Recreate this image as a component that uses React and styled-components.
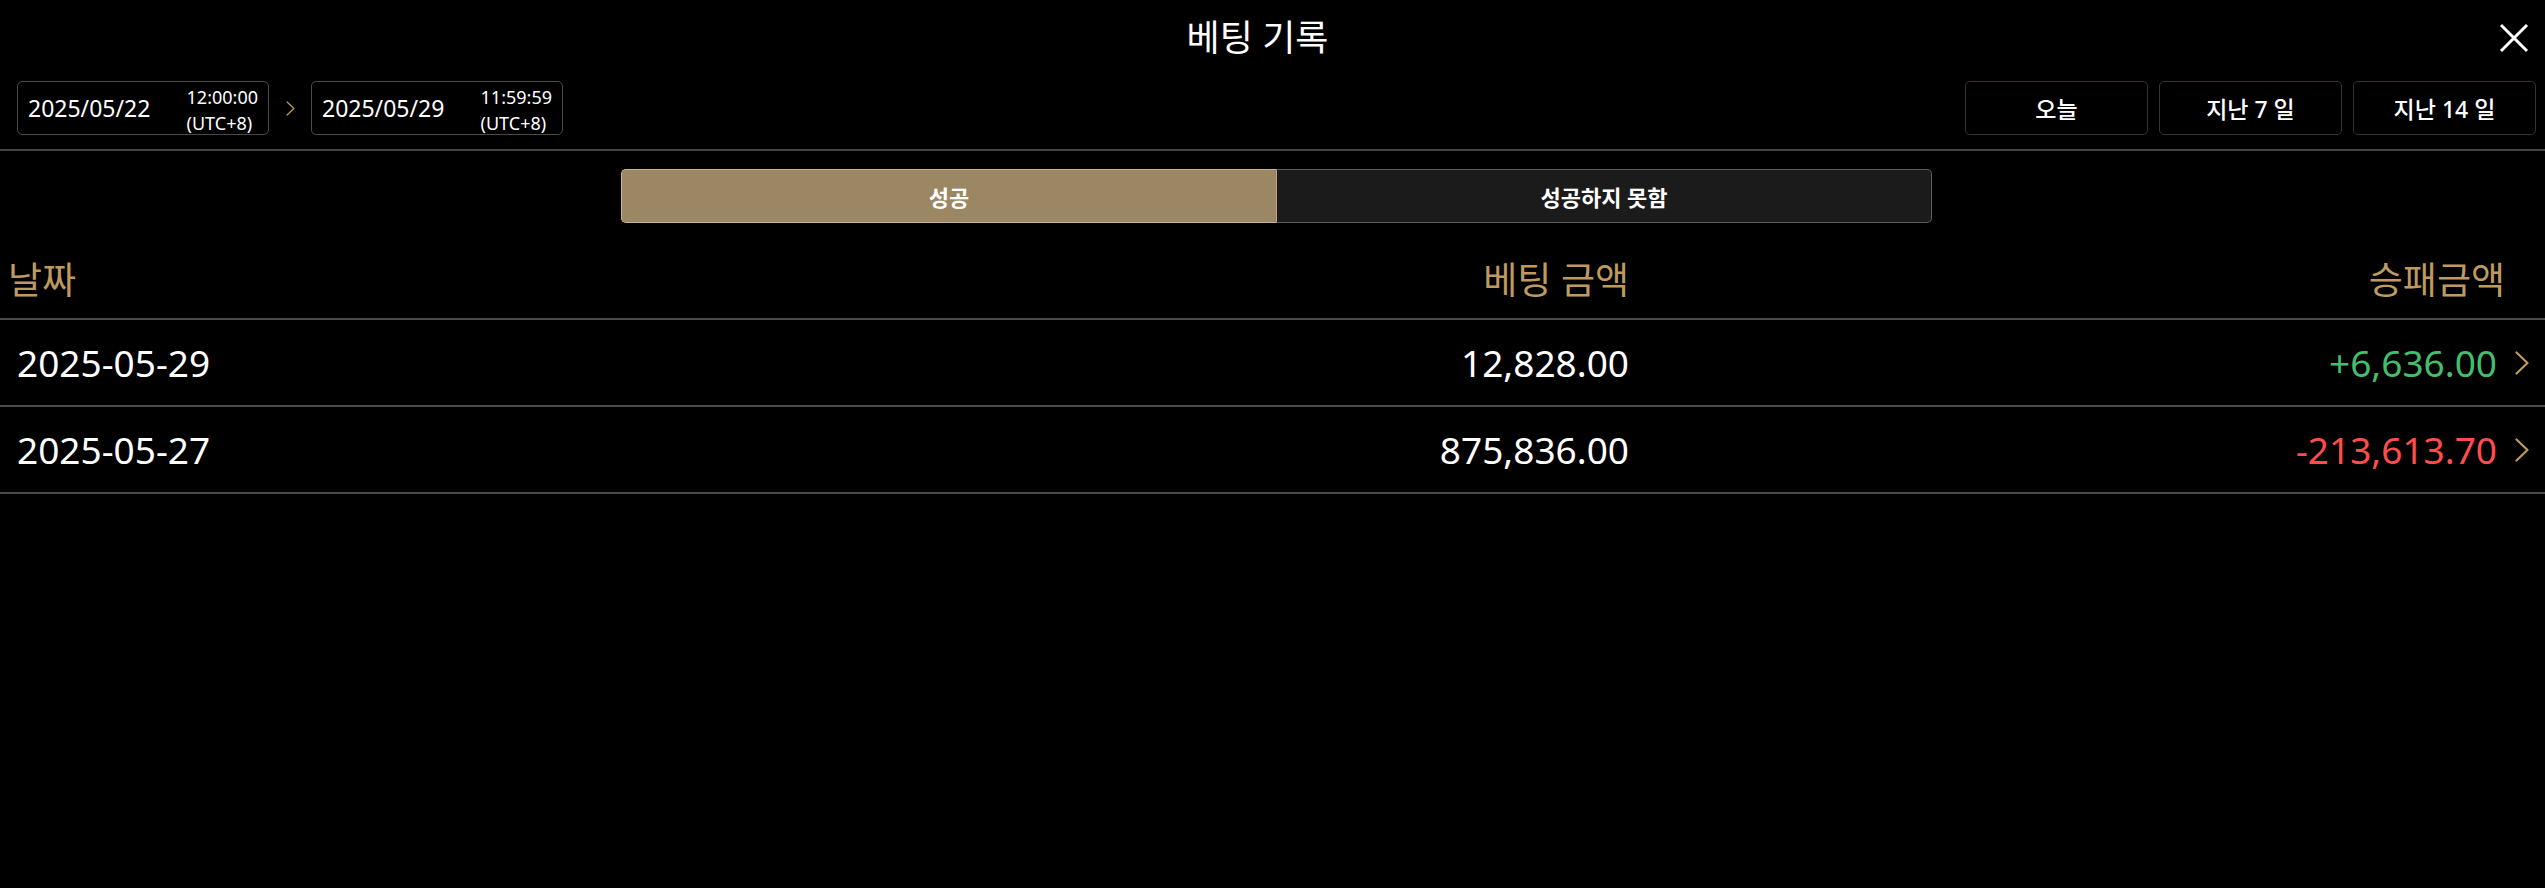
import React from 'react';
import styled, {createGlobalStyle} from 'styled-components';

const colors = {
    gold: '#bf9a5f',
    tan: '#9b8763',
    tanBorder: '#c8b38c',
    line: '#4a4a4a',
    green: '#42be6d',
    red: '#ff4d4d',
};

const GlobalStyle = createGlobalStyle`
    html, body {
        margin: 0;
        background: #000;
        color: #fff;
        font-family: "Noto Sans", "Noto Sans CJK KR", sans-serif;
    }
    * { box-sizing: border-box; }
`;

const rows = [
    {date: '2025-05-29', bet: '12,828.00', result: '+6,636.00', win: true},
    {date: '2025-05-27', bet: '875,836.00', result: '-213,613.70', win: false},
];

const Chevron = ({w = 14, h = 24, stroke = 2.2}) => (
    <svg width={w} height={h} viewBox="0 0 14 24" fill="none">
        <path d="M1.5 1.5 L12.5 12 L1.5 22.5" stroke={colors.gold} strokeWidth={stroke} strokeLinecap="round" strokeLinejoin="round" />
    </svg>
);

const App = () => {
    return <Page>
        <GlobalStyle />
        <Header>
            <Title>베팅 기록</Title>
            <CloseButton aria-label="close">
                <svg width="30" height="30" viewBox="0 0 30 30">
                    <path d="M2 2 L28 28 M28 2 L2 28" stroke="#fff" strokeWidth="3" />
                </svg>
            </CloseButton>
        </Header>

        <Toolbar>
            <DateBox>
                <DateText>2025/05/22</DateText>
                <TimeText>12:00:00<br />(UTC+8)</TimeText>
            </DateBox>
            <RangeArrow>
                <Chevron w={9} h={15} stroke={2} />
            </RangeArrow>
            <DateBox>
                <DateText>2025/05/29</DateText>
                <TimeText>11:59:59<br />(UTC+8)</TimeText>
            </DateBox>

            <QuickRange>
                <RangeButton>오늘</RangeButton>
                <RangeButton>지난 7 일</RangeButton>
                <RangeButton>지난 14 일</RangeButton>
            </QuickRange>
        </Toolbar>

        <TabsWrap>
            <Tabs>
                <Tab $active>성공</Tab>
                <Tab>성공하지 못함</Tab>
            </Tabs>
        </TabsWrap>

        <HeadRow>
            <span>날짜</span>
            <span>베팅 금액</span>
            <span>승패금액</span>
        </HeadRow>

        {rows.map(row => (
            <DataRow key={row.date}>
                <span>{row.date}</span>
                <span>{row.bet}</span>
                <ResultCell>
                    <Amount $win={row.win}>{row.result}</Amount>
                    <Chevron />
                </ResultCell>
            </DataRow>
        ))}
    </Page>
}

export default App;

const Page = styled.div`
    width: 100%;
    min-height: 888px;
    background: #000;
`;

const Header = styled.header`
    display: flex;
    align-items: center;
    height: 76px;
    padding: 0 16px;
`;

const Title = styled.h1`
    flex: 1;
    margin: 0;
    text-align: center;
    font-size: 36px;
    font-weight: 400;
    line-height: 1.2;
`;

const CloseButton = styled.button`
    width: 30px;
    height: 30px;
    padding: 0;
    border: none;
    background: transparent;
    display: flex;
    cursor: pointer;
`;

const Toolbar = styled.div`
    display: flex;
    align-items: center;
    padding: 5px 9px 14px 17px;
    border-bottom: 2px solid #444;
`;

const DateBox = styled.div`
    width: 252px;
    height: 54px;
    display: flex;
    align-items: center;
    justify-content: space-between;
    padding: 0 10px;
    border: 1px solid ${colors.line};
    border-radius: 5px;
`;

const DateText = styled.span`
    font-size: 23px;
`;

const TimeText = styled.span`
    font-size: 18px;
    line-height: 26px;
    padding-top: 4px;
`;

const RangeArrow = styled.span`
    width: 42px;
    display: flex;
    justify-content: center;
`;

const QuickRange = styled.div`
    margin-left: auto;
    display: flex;
    gap: 11px;
`;

const RangeButton = styled.button`
    width: 183px;
    height: 54px;
    background: #000;
    color: #fff;
    border: 1px solid #3b3428;
    border-radius: 5px;
    font-family: inherit;
    font-size: 23px;
    font-weight: 500;
`;

const TabsWrap = styled.div`
    display: flex;
    justify-content: center;
    padding: 18px 0 0 8px;
`;

const Tabs = styled.div`
    display: flex;
    width: 1311px;
    height: 54px;
`;

const Tab = styled.button`
    flex: 1;
    font-family: inherit;
    font-size: 22px;
    font-weight: 700;
    color: #fff;
    background: ${p => p.$active ? colors.tan : '#1b1b1b'};
    border: 1px solid ${p => p.$active ? colors.tanBorder : '#5c5c5c'};
    border-radius: ${p => p.$active ? '5px 0 0 5px' : '0 5px 5px 0'};
    ${p => p.$active ? 'border-right: none;' : 'border-left: 1px solid #b9a682;'}
`;

const HeadRow = styled.div`
    display: grid;
    grid-template-columns: 1fr auto 876px;
    padding: 36px 40px 17px 8px;
    border-bottom: 2px solid ${colors.line};
    color: ${colors.gold};
    font-size: 37px;
    line-height: 42px;

    span:nth-child(n+2) {
        text-align: right;
    }
`;

const DataRow = styled.div`
    display: grid;
    grid-template-columns: 1fr auto 900px;
    align-items: center;
    height: 87px;
    padding: 0 16px 0 17px;
    border-bottom: 2px solid ${colors.line};
    font-size: 37px;

    span:nth-child(2) {
        text-align: right;
    }
`;

const ResultCell = styled.div`
    display: flex;
    justify-content: flex-end;
    align-items: center;
    gap: 18px;
`;

const Amount = styled.span`
    color: ${p => p.$win ? colors.green : colors.red};
`;
